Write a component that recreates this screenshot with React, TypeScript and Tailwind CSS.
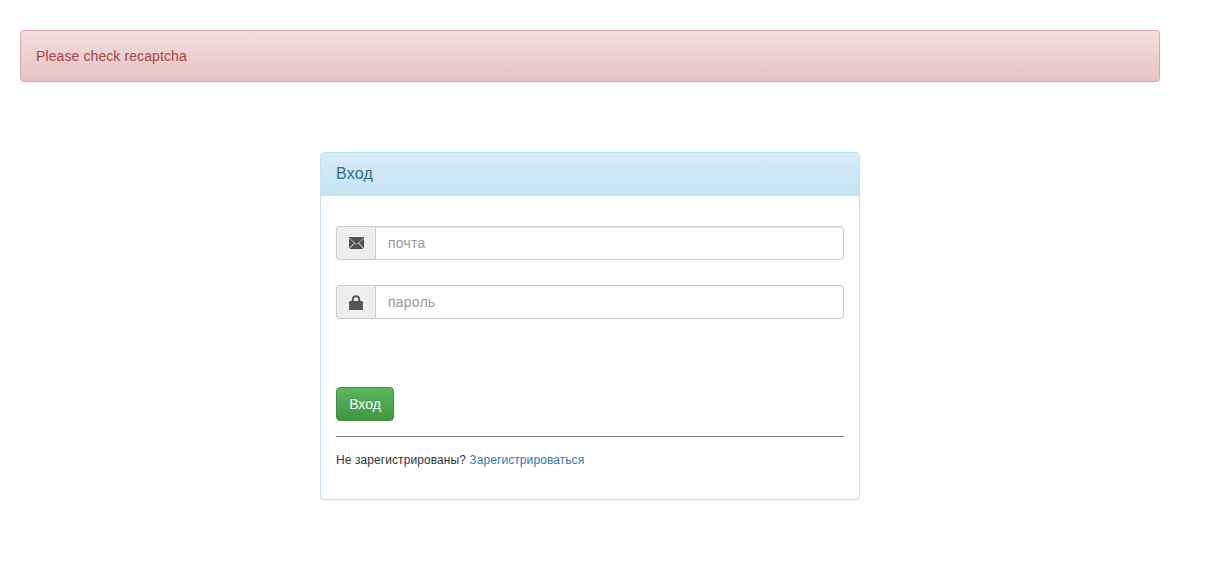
import React from 'react';

function EnvelopeIcon() {
  return (
    <svg width="15" height="12" viewBox="0 0 15 12" className="block">
      <rect x="0" y="0" width="15" height="12" fill="#4f4f4f" />
      <path d="M0 1L7.500 7.600 15 1" fill="none" stroke="#ffffff" strokeWidth="0.6" />
      <path d="M0 12.300L5.300 6M15 12.300L9.700 6" fill="none" stroke="#ffffff" strokeWidth="0.9" />
    </svg>
  );
}

function LockIcon() {
  return (
    <svg width="14" height="15" viewBox="0 0 14 15" className="block">
      <path
        d="M2.800 6V4.400C2.800 1.900 4.600.3 7 .3s4.200 1.600 4.200 4.100V6h1.700c.6 0 1 .4 1 1v7c0 .6-.4 1-1 1H1.100c-.6 0-1-.4-1-1V7c0-.6.4-1 1-1zM4.700 6h4.600V4.500C9.300 3 8.400 2.200 7 2.200s-2.300.8-2.300 2.300z"
        fill="#555555"
        fillRule="evenodd"
      />
    </svg>
  );
}

function InputRow({ icon, placeholder, type }: { icon: React.ReactNode; placeholder: string; type: string }) {
  return (
    <div className="flex h-[34px]">
      <span className="flex w-[39px] shrink-0 items-center justify-center rounded-l-[4px] border border-r-0 border-[#cccccc] bg-[#eeeeee]">
        {icon}
      </span>
      <input
        type={type}
        placeholder={placeholder}
        className="h-[34px] min-w-0 flex-1 rounded-r-[4px] border border-[#cccccc] bg-white px-3 text-[14px] tracking-[0.2px] text-[#555555] shadow-[inset_0_1px_1px_rgba(0,0,0,0.075)] outline-none placeholder:text-[#999999]"
      />
    </div>
  );
}

export default function App() {
  return (
    <div className="min-h-[582px] bg-white px-5 pt-[30px] font-['Liberation_Sans',Arial,sans-serif] text-[14px] leading-[20px] text-[#333333]">
      <div className="w-[1140px]">
        {/* alerta */}
        <div className="rounded-[4px] border border-[#dca7a7] bg-gradient-to-b from-[#f2dede] to-[#e7c3c3] p-[15px] tracking-[0.1px] text-[#a94442] shadow-[inset_0_1px_0_rgba(255,255,255,0.25),0_1px_2px_rgba(0,0,0,0.05)]">
          Please check recaptcha
        </div>

        {/* painel de login */}
        <div className="mx-auto mt-[70px] w-[540px] rounded-[4px] border border-[#bce8f1] bg-white shadow-[0_1px_1px_rgba(0,0,0,0.05)]">
          <div className="h-[43px] rounded-t-[3px] border-b border-[#bce8f1] bg-gradient-to-b from-[#d9edf7] to-[#c4e3f3] px-[15px] pt-[11px] pb-[9px] text-[16px] leading-[20px] tracking-[0.2px] text-[#31708f]">
            Вход
          </div>
          <div className="px-[15px] pt-[30px] pb-[30px]">
            <InputRow icon={<EnvelopeIcon />} placeholder="почта" type="email" />
            <div className="mt-[25px]">
              <InputRow icon={<LockIcon />} placeholder="пароль" type="password" />
            </div>
            <button
              type="button"
              className="mt-[68px] block h-[34px] w-[58px] rounded-[4px] border border-[#3e8f3e] bg-gradient-to-b from-[#5cb85c] to-[#419641] text-center text-[14px] text-white [text-shadow:0_-1px_0_rgba(0,0,0,0.2)]"
            >
              Вход
            </button>
            <hr className="mt-[15px] border-0 border-t border-[#808080]" />
            <p className="mt-[15px] text-[12px] leading-[17px] tracking-[0.08px] text-[#333333]">
              Не зарегистрированы? <a href="#" className="text-[#337ab7]">Зарегистрироваться</a>
            </p>
          </div>
        </div>
      </div>
    </div>
  );
}
